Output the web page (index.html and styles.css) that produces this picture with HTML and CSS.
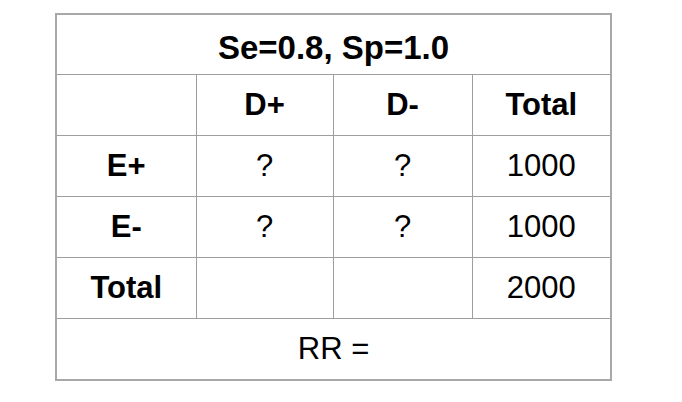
FILE: index.html
```html
<!DOCTYPE html>
<html>
<head>
<meta charset="utf-8">
<link rel="stylesheet" href="styles.css">
</head>
<body>
<div class="page">
<table class="ct">
  <colgroup>
    <col class="c1"><col class="c2"><col class="c3"><col class="c4">
  </colgroup>
  <tr><th colspan="4" class="title">Se=0.8, Sp=1.0</th></tr>
  <tr><td></td><th>D+</th><th>D-</th><th>Total</th></tr>
  <tr><th>E+</th><td>?</td><td>?</td><td>1000</td></tr>
  <tr><th>E-</th><td>?</td><td>?</td><td>1000</td></tr>
  <tr><th>Total</th><td></td><td></td><td>2000</td></tr>
  <tr><td colspan="4">RR =</td></tr>
</table>
</div>
</body>
</html>
```
FILE: styles.css
```css
html, body {
  margin: 0;
  padding: 0;
  background: #ffffff;
}
.page {
  padding: 13px 0 0 55px;
}
.ct {
  border-collapse: collapse;
  width: 557px;
  font-family: "Liberation Sans", Arial, sans-serif;
  font-size: 31px;
  color: #000;
  border: 2px solid #a8a8a8;
}
.c1 { width: 140px; }
.c2 { width: 137px; }
.c3 { width: 139px; }
.c4 { width: 139px; }
.ct th, .ct td {
  border: 1px solid #9e9e9e;
  height: 60px;
  padding: 0;
  text-align: center;
  vertical-align: middle;
  font-weight: normal;
}
.ct th { font-weight: bold; }
.ct .title { font-size: 33px; padding-top: 6px; height: 53px; }
```
